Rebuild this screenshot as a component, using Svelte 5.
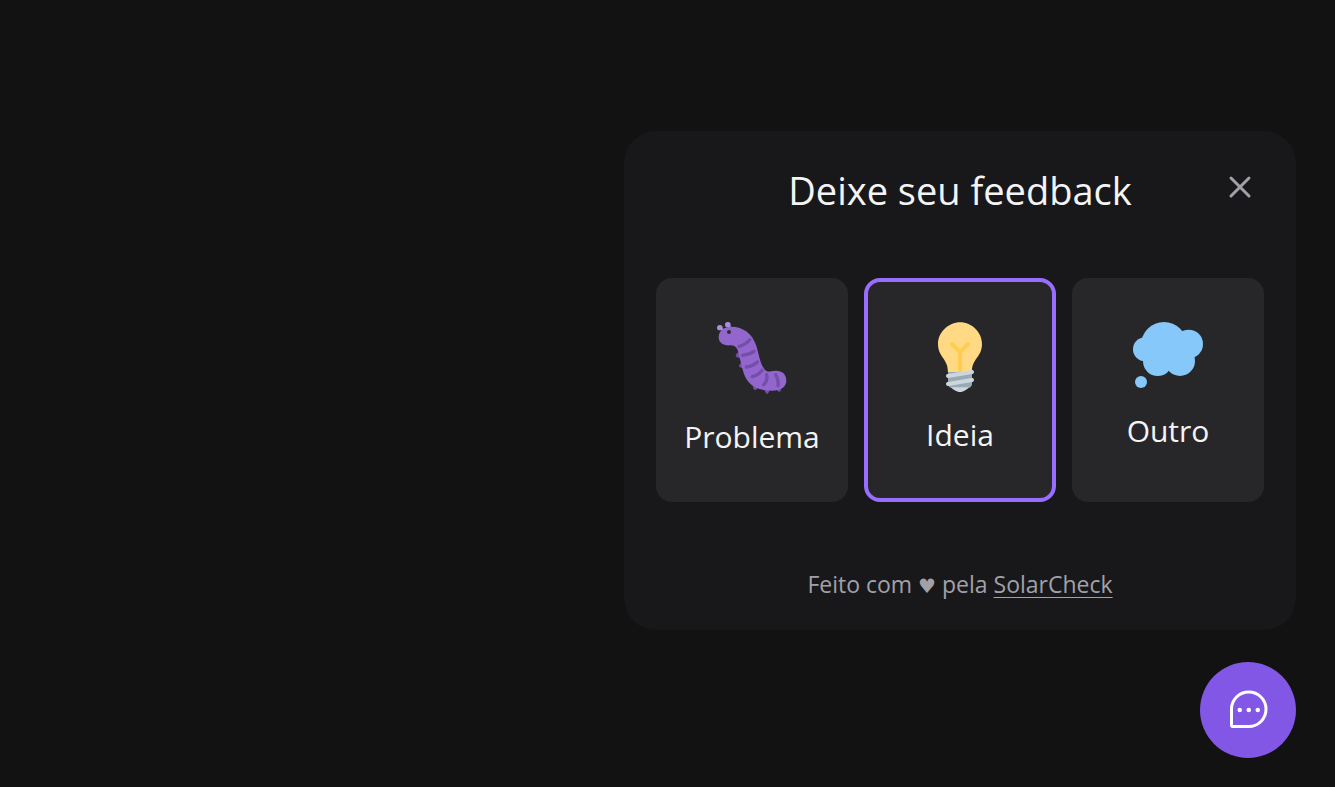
<script>
  const options = [
    { id: 'bug', label: 'Problema' },
    { id: 'idea', label: 'Ideia' },
    { id: 'other', label: 'Outro' }
  ];

  let open = $state(true);
  let selected = $state('idea');
</script>

<main class="page">
  {#if open}
    <section class="panel" aria-labelledby="feedback-title">
      <header class="head">
        <h1 id="feedback-title">Deixe seu feedback</h1>
        <button class="close" type="button" aria-label="Fechar" onclick={() => (open = false)}>
          <svg viewBox="0 0 256 256" width="32" height="32" fill="none" stroke="currentColor" stroke-width="24" stroke-linecap="round">
            <path d="M200 56 56 200M200 200 56 56" />
          </svg>
        </button>
      </header>

      <div class="options">
        {#each options as option (option.id)}
          <button
            class="option"
            class:selected={selected === option.id}
            type="button"
            aria-pressed={selected === option.id}
            onclick={() => (selected = option.id)}
          >
            {#if option.id === 'bug'}
              <svg viewBox="33 30 210 216" width="70" height="72" aria-hidden="true">
                <g fill="#744eaa">
                  <path d="M99 119q-9 4-10 12q2 7 16 6zM109 151q-9 4-10 11q2 7 18 6zM143 214q-4 12 0 18q4 5 9 0l10-10zM174 226q2 16 9 20q7-3 9-18zM207 226q6 12 12 14q7-2 7-14z" />
                </g>
                <g fill="none" stroke="#aa8dd8" stroke-linecap="round">
                  <path stroke-width="7" d="M43 48q9 4 11 14M67 40q7 6 5 15" />
                  <path stroke-width="16" d="M41 47h1M65 38h1" />
                </g>
                <path fill="#9266cc" d="M38 76c0-21 17-32 37-32 38 0 64 22 75 55 9 26 11 54 25 72 5 7 12 9 20 7 27-7 46 5 46 27 0 19-14 30-39 31-43 1-75-13-88-50-8-23-12-49-19-72-5-10-11-14-21-14-21 2-36-7-36-24z" />
                <g fill="none" stroke="#744eaa" stroke-width="10" stroke-linecap="round">
                  <path d="M99 103q20-5 32-20M110 130q21-3 34-12M121 165q20-2 33-15M139 194q20-6 29-19M173 218q13-13 9-30M216 221q3-17-7-33" />
                </g>
                <circle cx="69" cy="60" r="6" fill="#292f33" />
              </svg>
            {:else if option.id === 'idea'}
              <svg viewBox="7 0 22 35" width="44" height="70" aria-hidden="true">
                <path fill="#ffd983" d="M29 11.06c0 6.439-5 7.439-5 13.44 0 3.098-3.123 3.359-5.5 3.359-2.053 0-6.586-.779-6.586-3.361C11.914 18.5 7 17.5 7 11.06 7 5.029 12.285.14 18.083.14 23.883.14 29 5.029 29 11.06z" />
                <path fill="#ffcc4d" d="M22.707 10.293c-.391-.391-1.023-.391-1.414 0L18 13.586l-3.293-3.293c-.391-.391-1.023-.391-1.414 0s-.391 1.023 0 1.414L17 15.414V26c0 .553.447 1 1 1s1-.447 1-1V15.414l3.707-3.707c.391-.391.391-1.023 0-1.414z" />
                <path fill="#99aab5" d="M24 31c0 1.104-.896 2-2 2h-8c-1.104 0-2-.896-2-2v-6h12v6z" />
                <path fill="#ccd6dd" d="M22.500 32.600c-.6.900-2.800 2.400-4.500 2.400s-3.900-1.500-4.500-2.400z" />
                <path fill="#ccd6dd" d="M11.999 32c-.48 0-.904-.347-.985-.836-.091-.544.277-1.06.822-1.15l12-2c.544-.098 1.06.277 1.15.822.091.544-.277 1.06-.822 1.15l-12 2c-.055.01-.111.014-.165.014zm0-4c-.48 0-.904-.347-.985-.836-.091-.544.277-1.06.822-1.15l12-2c.544-.097 1.06.277 1.15.822.091.544-.277 1.06-.822 1.15l-12 2c-.055.01-.111.014-.165.014z" />
              </svg>
            {:else}
              <svg viewBox="33 30 210 198" width="70" height="66" fill="#85c8f9" aria-hidden="true">
                <circle cx="126" cy="99" r="69" />
                <circle cx="200" cy="96" r="43" />
                <circle cx="69" cy="112" r="36" />
                <circle cx="107" cy="148" r="44" />
                <circle cx="174" cy="147" r="45" />
                <circle cx="57" cy="210" r="18" />
              </svg>
            {/if}
            <span>{option.label}</span>
          </button>
        {/each}
      </div>

      <footer class="foot">
        Feito com <span class="heart">♥</span> pela <a href="#solarcheck">SolarCheck</a>
      </footer>
    </section>
  {/if}

  <button class="launcher" type="button" aria-label="Abrir feedback" onclick={() => (open = !open)}>
    <svg viewBox="0 0 256 256" width="48" height="48">
      <path fill="none" stroke="currentColor" stroke-width="16" stroke-linejoin="round" d="M132 216H47.700a7.600 7.600 0 0 1-7.700-7.700V124a92 92 0 0 1 184 0 92 92 0 0 1-92 92Z" />
      <g fill="currentColor">
        <circle cx="84" cy="128" r="12" />
        <circle cx="132" cy="128" r="12" />
        <circle cx="180" cy="128" r="12" />
      </g>
    </svg>
  </button>
</main>

<style>
  :global(body) {
    margin: 0;
    background: #121212;
  }

  .page {
    box-sizing: border-box;
    min-height: 100vh;
    padding: 29px 39px;
    display: flex;
    flex-direction: column;
    justify-content: flex-end;
    align-items: flex-end;
    gap: 32px;
    font-family: "Segoe UI", "Open Sans", "Noto Sans", sans-serif;
    color: #f4f4f5;
  }

  button {
    border: 0;
    padding: 0;
    font: inherit;
    color: inherit;
    cursor: pointer;
  }

  svg {
    display: block;
  }

  .panel {
    box-sizing: border-box;
    width: 100%;
    max-width: 672px;
    padding: 32px;
    border-radius: 32px;
    background: #18181b;
  }

  .head {
    display: grid;
    grid-template-columns: 48px 1fr 48px;
    align-items: start;
  }

  h1 {
    grid-column: 2;
    margin: 0;
    font-size: 38px;
    line-height: 54px;
    font-weight: 400;
    text-align: center;
  }

  .close {
    padding: 8px;
    background: none;
    color: #a1a1aa;
  }

  .options {
    display: grid;
    grid-template-columns: repeat(3, 1fr);
    gap: 16px;
    padding: 61px 0 68px;
  }

  .option {
    box-sizing: border-box;
    min-height: 224px;
    padding: 40px 0 32px;
    border: 4px solid transparent;
    border-radius: 16px;
    background: #27272a;
    display: flex;
    flex-direction: column;
    align-items: center;
    gap: 20px;
    font-size: 30px;
    line-height: 46px;
  }

  .option.selected {
    border-color: #996dff;
  }

  .foot {
    font-size: 23px;
    line-height: 28px;
    text-align: center;
    color: #a1a1aa;
  }

  .heart {
    font-family: "DejaVu Sans", sans-serif;
    font-size: 20px;
    line-height: 1;
  }

  .foot a {
    color: inherit;
    text-underline-offset: 4px;
    text-decoration-thickness: 1px;
  }

  .launcher {
    width: 96px;
    height: 96px;
    border-radius: 50%;
    background: #8257e5;
    color: #fff;
    display: grid;
    place-items: center;
  }
</style>
